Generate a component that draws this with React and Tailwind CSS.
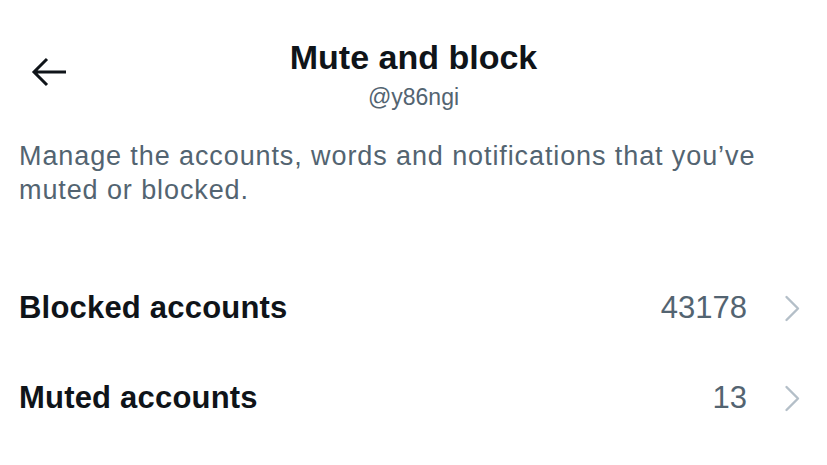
import React from "react";

const rows = [
    { label: "Blocked accounts", count: "43178" },
    { label: "Muted accounts", count: "13" },
];

const Chevron = () => (
    <svg width="17" height="27" viewBox="0 0 17 27" fill="none">
        <path
            d="M2.5 2 L14 13.5 L2.5 25"
            stroke="#b4bfc8"
            strokeWidth="2.4"
            strokeLinecap="round"
            strokeLinejoin="round"
        />
    </svg>
);

const App = () => {
    return (
        <div
            className="w-[827px] h-[465px] bg-white text-[#0f1419] overflow-hidden"
            style={{ fontFamily: '"Liberation Sans", Arial, sans-serif' }}
        >
            <div className="grid grid-cols-[1fr_auto_1fr] pt-[37px]">
                <div className="pl-[31px] pt-[20px]">
                    <svg width="38" height="32" viewBox="0 0 38 32" fill="none">
                        <path
                            d="M3 15 H35 M16 2 L3 15 L16 28"
                            stroke="#0f1419"
                            strokeWidth="3"
                        />
                    </svg>
                </div>
                <div className="flex flex-col items-center">
                    <h1 className="text-[34px] leading-[40px] font-bold">Mute and block</h1>
                    <p className="text-[23px] leading-[28px] text-[#536471] mt-[6px]">@y86ngi</p>
                </div>
                <div></div>
            </div>

            <p className="mt-[28px] px-[19px] text-[27px] leading-[34px] tracking-[0.9px] text-[#536471]">
                Manage the accounts, words and notifications that you’ve muted or blocked.
            </p>

            <ul className="mt-[56px]">
                {rows.map((row) => (
                    <li
                        key={row.label}
                        className="h-[90px] flex items-center pl-[19px] pr-[26px]"
                    >
                        <span className="flex-1 text-[31px] leading-[36px] font-bold tracking-[0.2px]">
                            {row.label}
                        </span>
                        <span className="text-[31px] leading-[36px] text-[#536471] mr-[37px]">
                            {row.count}
                        </span>
                        <Chevron />
                    </li>
                ))}
            </ul>
        </div>
    );
};

export default App;
